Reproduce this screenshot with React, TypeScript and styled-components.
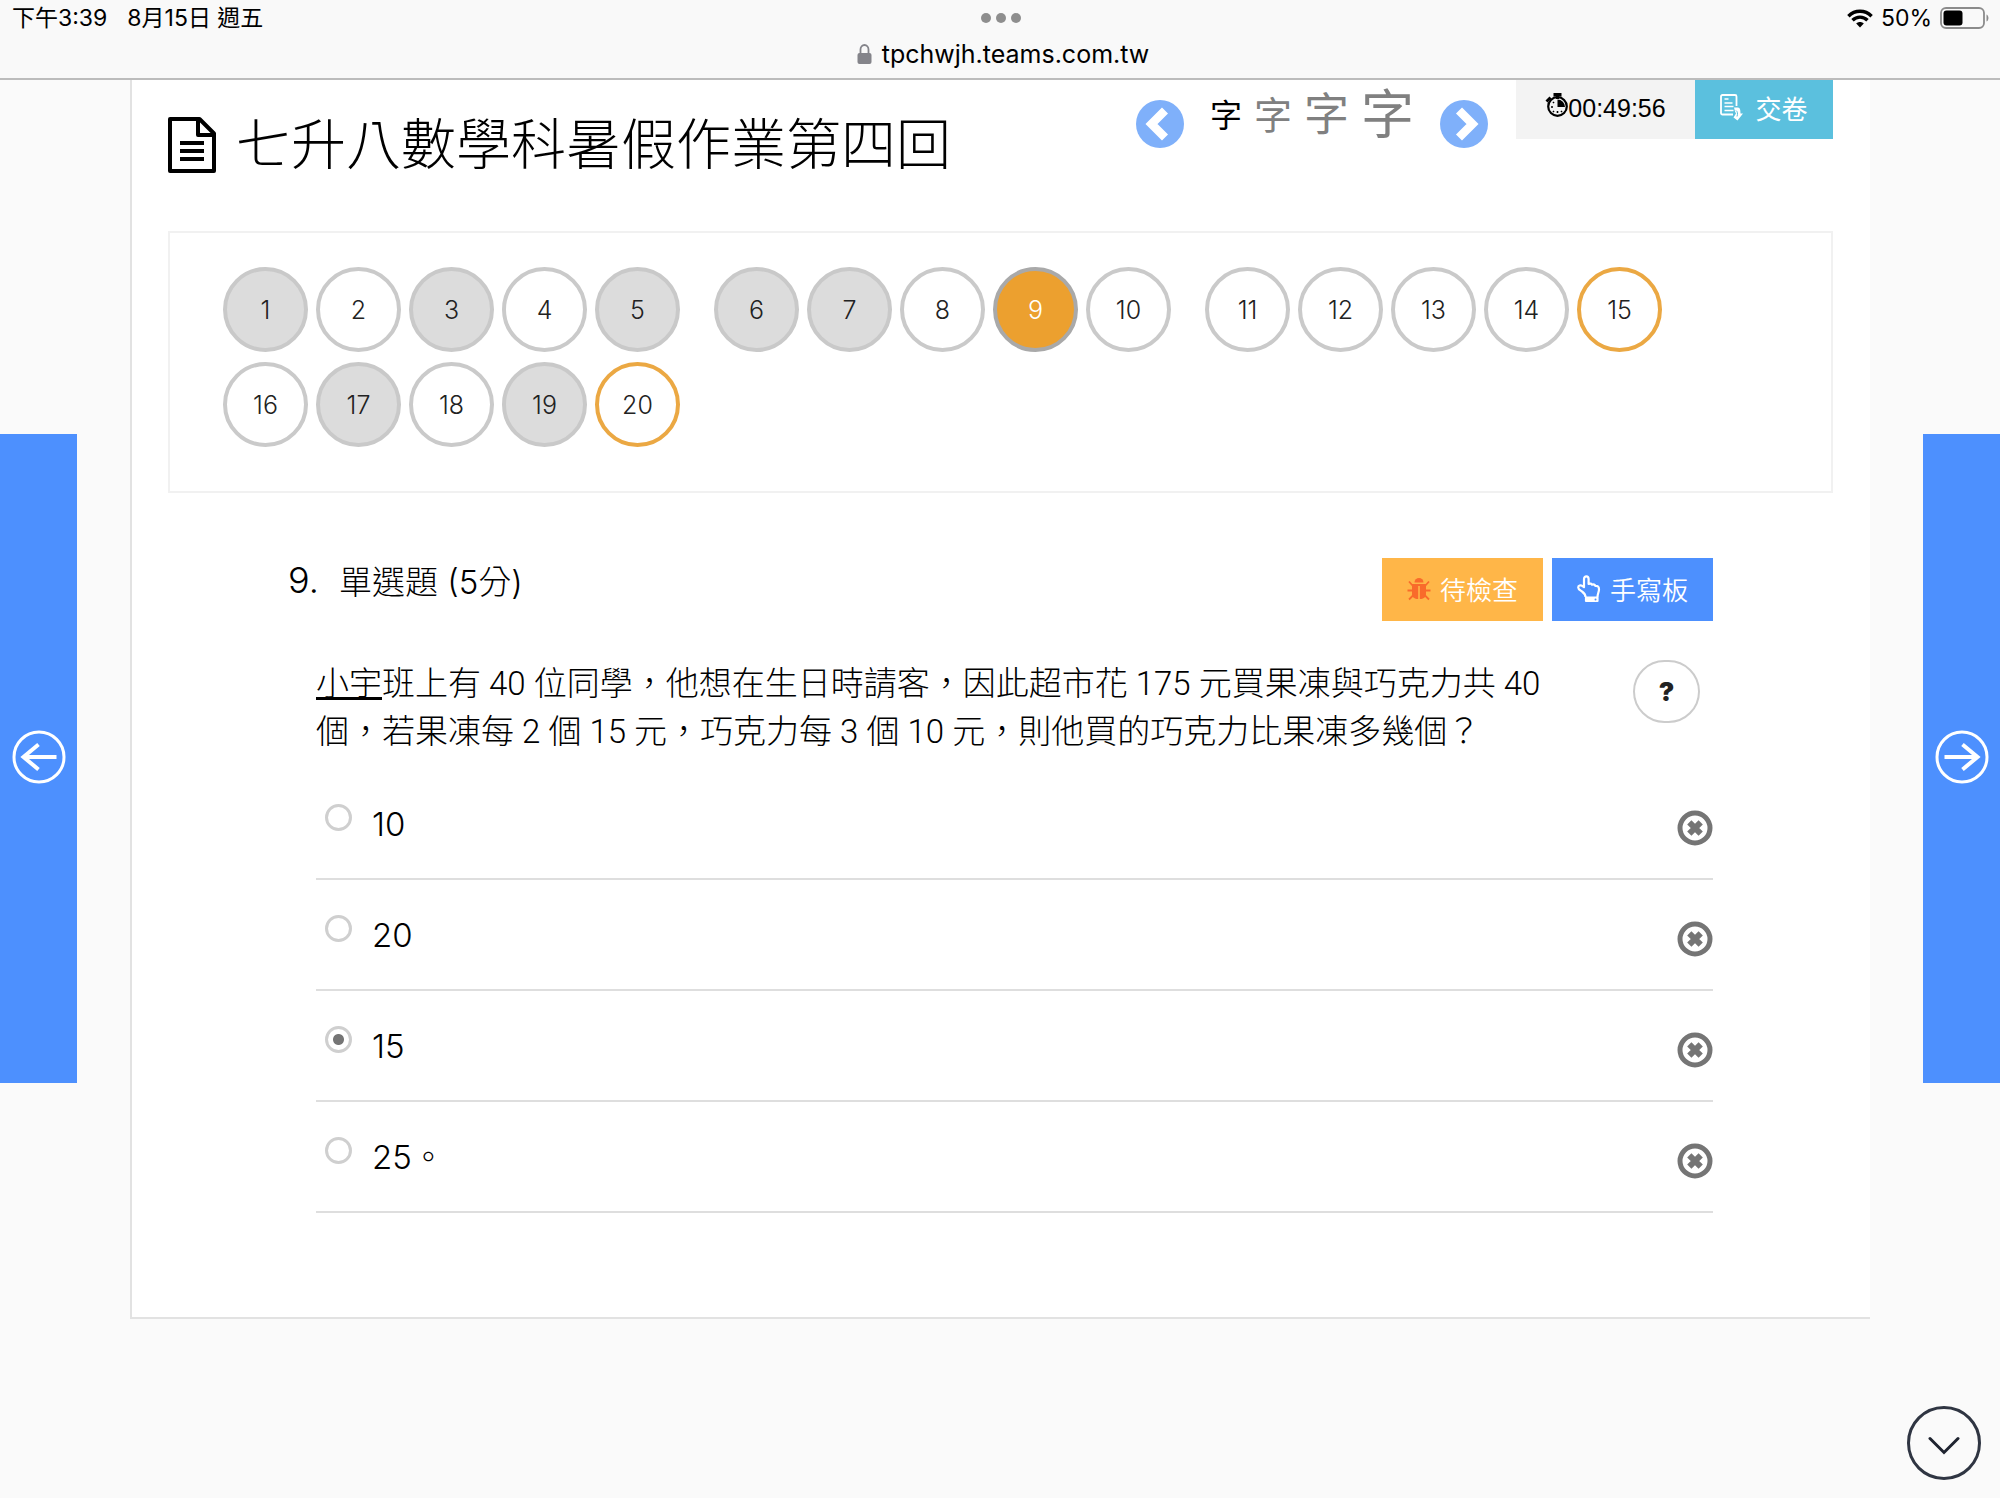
import React, { useState } from "react";
import styled, { createGlobalStyle, css } from "styled-components";

const GlobalStyle = createGlobalStyle`
  *, *::before, *::after { box-sizing: border-box; }
  body {
    margin: 0;
    background: #fafafa;
    color: #000;
    font-family: Roboto, "Noto Sans CJK TC", sans-serif;
    font-weight: 300;
  }
  button, input { font: inherit; color: inherit; margin: 0; }
  button { cursor: pointer; }
  svg { display: block; flex: none; }
`;

const BrowserBar = styled.header`
  display: flex;
  flex-direction: column;
  height: 80px;
  background: #f9f9f9;
  border-bottom: 2px solid #bcbcbc;
  font-family: Inter, "Noto Sans CJK TC", sans-serif;
  font-weight: 400;
`;

const StatusRow = styled.div`
  display: grid;
  grid-template-columns: 1fr auto 1fr;
  align-items: center;
  height: 36px;
  padding: 0 10px 0 12px;
  font-size: 23px;
  line-height: 36px;
`;

const StatusGroup = styled.div<{ $end?: boolean }>`
  display: flex;
  align-items: center;
  gap: ${(p) => (p.$end ? "8px" : "20px")};
  justify-content: ${(p) => (p.$end ? "flex-end" : "flex-start")};
`;

const Dots = styled.div`
  display: flex;
  gap: 5px;
`;

const Dot = styled.span`
  width: 10px;
  height: 10px;
  border-radius: 50%;
  background: #8e8e8e;
`;

const AddressRow = styled.div`
  display: flex;
  justify-content: center;
  align-items: center;
  gap: 10px;
  height: 36px;
  padding-left: 6px;
  font-size: 25px;
  line-height: 36px;
`;

const Shell = styled.div`
  display: grid;
  grid-template-columns: 77px minmax(0, 1fr) 77px;
  column-gap: 53px;
  align-items: start;
`;

const SideButton = styled.button`
  display: flex;
  align-items: center;
  justify-content: center;
  height: 649px;
  margin-top: 354px;
  padding: 0 0 4px;
  border: 0;
  background: #4d90fe;
  color: #fff;
`;

const Sheet = styled.main`
  background: #fff;
  border-left: 2px solid #e2e2e2;
  border-bottom: 2px solid #e2e2e2;
  padding: 0 37px 104px 36px;
`;

const ExamHeader = styled.div`
  display: flex;
  justify-content: space-between;
  align-items: flex-start;
  height: 151px;
`;

const Title = styled.h1`
  display: flex;
  align-items: center;
  gap: 20px;
  margin: 0;
  padding-top: 33px;
  font-size: 55px;
  line-height: 64px;
  font-weight: 300;
`;

const Tools = styled.div`
  display: flex;
  align-items: flex-start;
`;

const FontSizer = styled.div`
  display: flex;
  align-items: center;
  padding-top: 12px;
  margin-right: 28px;
`;

const RoundArrow = styled.button`
  padding: 0;
  border: 0;
  background: none;
`;

const Sizes = styled.div`
  display: flex;
  align-items: center;
  gap: 12px;
  height: 48px;
  padding: 0 26px;
  margin-bottom: 16px;
`;

const SizeButton = styled.button<{ $size: number; $active?: boolean }>`
  padding: 0;
  border: 0;
  background: none;
  font-size: ${(p) => p.$size}px;
  line-height: 56px;
  font-weight: 400;
  color: ${(p) => (p.$active ? "#000" : "#808080")};
`;

const Timer = styled.div`
  display: flex;
  align-items: center;
  justify-content: center;
  width: 179px;
  height: 59px;
  padding-bottom: 3px;
  background: #f3f3f3;
  font-family: "Liberation Sans", sans-serif;
  font-size: 25px;
  font-weight: 400;
`;

const Submit = styled.button`
  display: flex;
  align-items: center;
  justify-content: center;
  gap: 11px;
  width: 138px;
  height: 59px;
  padding: 0 0 4px;
  border: 0;
  background: #5bc0de;
  color: #fff;
  font-size: 26px;
  font-weight: 400;
`;

const Navigator = styled.nav`
  display: flex;
  flex-wrap: wrap;
  align-content: flex-start;
  column-gap: 34px;
  row-gap: 10px;
  min-height: 262px;
  padding: 34px 53px;
  border: 2px solid #f1f1f1;
`;

const NumberGroup = styled.div`
  display: flex;
  gap: 8px;
`;

type NumberState = "open" | "done" | "current" | "flagged";

const stateStyles = {
  open: css`background: #fff; border-color: #cacaca;`,
  done: css`background: #dcdcdc; border-color: #c9c9c9;`,
  current: css`background: #eca02f; border-color: #a9a9a9; color: #fff;`,
  flagged: css`background: #fff; border-color: #eba843;`,
};

const NumberButton = styled.button<{ $state: NumberState }>`
  width: 85px;
  height: 85px;
  padding: 0;
  border: 4px solid;
  border-radius: 50%;
  font-family: Inter, sans-serif;
  font-size: 25px;
  color: #222;
  ${(p) => stateStyles[p.$state]}
`;

const Question = styled.section`
  padding: 65px 120px 0 120px;
`;

const QuestionHead = styled.div`
  display: flex;
  justify-content: space-between;
  align-items: flex-start;
  height: 64px;
`;

const Kind = styled.h2`
  display: flex;
  align-items: flex-start;
  gap: 20px;
  margin: 0;
  font-family: Inter, "Noto Sans CJK TC", sans-serif;
  font-size: 33px;
  line-height: 48px;
  font-weight: 300;
`;

const Ordinal = styled.span`
  font-size: 36px;
  line-height: 44px;
`;

const Actions = styled.div`
  display: flex;
  gap: 9px;
`;

const ActionButton = styled.button<{ $tone: "warn" | "primary" }>`
  display: flex;
  align-items: center;
  justify-content: center;
  gap: 9px;
  width: 161px;
  height: 63px;
  padding: 0 0 2px;
  border: 0;
  background: ${(p) => (p.$tone === "warn" ? "#ffb648" : "#4d90fe")};
  color: #fff;
  font-size: 26px;
  font-weight: 350;
`;

const QuestionBody = styled.div`
  display: flex;
  justify-content: space-between;
  align-items: flex-start;
  padding: 38px 13px 0 28px;
`;

const Prompt = styled.p`
  margin: 0;
  max-width: 1250px;
  font-size: 33px;
  line-height: 48px;
`;

const HelpButton = styled.button`
  width: 67px;
  height: 63px;
  padding: 0;
  border: 2px solid #ccc;
  border-radius: 32px;
  background: #fff;
  color: #222;
  font-family: Inter, sans-serif;
  font-size: 26px;
  font-weight: 900;
`;

const Options = styled.ul`
  margin: 13px 0 0 28px;
  padding: 0;
  list-style: none;
`;

const OptionRow = styled.li`
  display: flex;
  justify-content: space-between;
  align-items: center;
  height: 111px;
  border-bottom: 2px solid #dedede;
`;

const OptionLabel = styled.label`
  display: flex;
  align-items: center;
  gap: 20px;
  font-family: Inter, "Noto Sans CJK TC", sans-serif;
  font-size: 33px;
  line-height: 48px;
`;

const Radio = styled.input`
  appearance: none;
  width: 27px;
  height: 27px;
  margin: 0 0 12px 9px;
  border: 3px solid #cfcfcf;
  border-radius: 50%;
  background: #fff;
  &:checked {
    background: radial-gradient(circle, #757575 5px, #fff 6px);
  }
`;

const EraseButton = styled.button`
  padding: 8px 0 0;
  border: 0;
  background: none;
`;

const ScrollDown = styled.button`
  position: fixed;
  right: 19px;
  bottom: 18px;
  display: flex;
  align-items: center;
  justify-content: center;
  width: 74px;
  height: 74px;
  padding: 3px 0 0;
  border: 3px solid #2f3542;
  border-radius: 50%;
  background: #fafafa;
`;

const WifiIcon = () => (
  <svg width="26" height="19" viewBox="0 0 26 19" aria-hidden="true" fill="none" stroke="#000" strokeWidth="3.4">
    <path d="M1.4 7.2C8 .6 18 .6 24.600 7.200" />
    <path d="M5.500 11.300c4.300-4.200 10.700-4.200 15 0" />
    <path d="M9.200 14.400c2.200-2 5.400-2 7.600 0L13 18.400z" fill="#000" stroke="none" />
  </svg>
);

const BatteryIcon = () => (
  <svg width="50" height="22" viewBox="0 0 50 22" aria-hidden="true">
    <rect x="1" y="1" width="43" height="20" rx="5" fill="none" stroke="#8b8b8b" strokeWidth="1.800" />
    <rect x="3.500" y="3.500" width="19" height="15" rx="3" />
    <path d="M46.500 7.500c2.600 1 2.600 6 0 7z" fill="#8b8b8b" />
  </svg>
);

const LockIcon = () => (
  <svg width="15" height="20" viewBox="0 0 15 20" aria-hidden="true">
    <rect x="0.500" y="9" width="14" height="11" rx="2" fill="#84848a" />
    <path d="M3.500 10V5.500a4 4.500 0 0 1 8 0V10" fill="none" stroke="#84848a" strokeWidth="1.800" />
  </svg>
);

const FileIcon = () => (
  <svg width="48" height="56" viewBox="0 0 48 56" aria-hidden="true" fill="none" stroke="#000" strokeWidth="4" strokeLinejoin="round">
    <path d="M2 2h29.500L46 16.500V54H2z" />
    <path d="M30 2v16h16" />
    <path d="M12 26h24M12 34h24M12 42h24" />
  </svg>
);

const CircleChevron = ({ next }: { next?: boolean }) => (
  <svg width="48" height="48" viewBox="0 0 48 48" aria-hidden="true">
    <circle cx="24" cy="24" r="24" fill="#7fb0fa" />
    <path
      d={next ? "M19 10.500 32.500 24 19 37.500" : "M29 10.500 15.500 24 29 37.500"}
      fill="none"
      stroke="#fff"
      strokeWidth="8.500"
    />
  </svg>
);

const StopwatchIcon = () => (
  <svg width="23" height="40" viewBox="0 0 23 40" aria-hidden="true">
    <circle cx="12.500" cy="18.500" r="9.300" fill="none" stroke="#000" strokeWidth="2.200" />
    <path d="M8.500 5h8v3.500h-8zM11 7h3v4h-3zM0.500 12.500l4-4 2 2-4 4z" />
    <path d="M12.500 19v-7.500a7.500 7.500 0 0 1 7.500 7.500z" />
    <path
      d="M6 19h2M8 14l1 1M8 24l1-1M12.500 25v-2M17 24l-1-1"
      stroke="#000"
      strokeWidth="1.600"
      fill="none"
    />
  </svg>
);

const SubmitIcon = () => (
  <svg width="24" height="36" viewBox="0 0 24 36" aria-hidden="true" fill="none" stroke="#fff" strokeWidth="1.800">
    <path d="M13 24.500H2.500a1.500 1.500 0 0 1-1.500-1.500V6.500A1.500 1.500 0 0 1 2.500 5h12.500a1.500 1.500 0 0 1 1.500 1.500V16" />
    <path d="M4.500 9h4M4.500 13h8M4.500 16.500h9M4.500 20.500h9" strokeWidth="1.400" />
    <path d="M14 17.500h4c2 .5 2.500 2 2.500 6h2.500l-5.500 7-4-3 2.500-4-1-2z" fill="#fff" stroke="none" />
    <path d="M16 20.500c1.500 1 2 3 1 6" stroke="#5bc0de" strokeWidth="1" />
  </svg>
);

const BugIcon = () => (
  <svg width="24" height="24" viewBox="0 0 24 24" aria-hidden="true" fill="#f96b2b">
    <path d="M7.500 5.500a4.500 4.500 0 0 1 9 0z" />
    <path d="M5 7h14v10c0 3-2.500 5-6.200 5V9h-1.600v13C7.500 22 5 20 5 17z" />
    <path d="M2 4.500 6 9M22 4.500 18 9M.500 13.500H6M23.500 13.500H18M2 22.500 6.500 18M22 22.500 17.500 18" stroke="#f96b2b" strokeWidth="1.800" />
  </svg>
);

const HandIcon = () => (
  <svg width="24" height="28" viewBox="0 0 24 28" aria-hidden="true" fill="none" stroke="#fff" strokeWidth="2.200" strokeLinejoin="round">
    <path d="M8.500 22c0-2.500-1.500-4-3.500-5.500-1.500-1.200-3.800-2-3.800-4 0-2.200 2.500-2.600 4-1.600l1.800 1.300V4c0-3.600 4.600-3.600 4.600 0v5c1.500-.8 2.900-.3 3.400.7 1.600-.6 2.900 0 3.300 1.100 2.400-.2 3.700 1 3.700 3.500 0 3-1.500 4.500-1.500 7.700" />
    <path d="M9 22.500h11.500V26H9z" fill="#fff" />
    <circle cx="18.500" cy="24.500" r="1" fill="#4d90fe" stroke="none" />
  </svg>
);

const CircleArrow = ({ next }: { next?: boolean }) => (
  <svg width="54" height="54" viewBox="0 0 54 54" aria-hidden="true" fill="none" stroke="#fff">
    <circle cx="27" cy="27" r="25" strokeWidth="3" />
    <path
      d={next ? "M9.500 27H43M27.500 14.500 42.500 27 27.500 39.500" : "M44.500 27H11M26.500 14.500 11.500 27 26.500 39.500"}
      strokeWidth="4"
    />
  </svg>
);

const EraseIcon = () => (
  <svg width="36" height="36" viewBox="0 0 36 36" aria-hidden="true" fill="none" stroke="#757575">
    <circle cx="18" cy="18" r="15" strokeWidth="5" />
    <path d="m12.300 12.300 11.400 11.400M23.700 12.300 12.300 23.700" strokeWidth="6" />
  </svg>
);

const ChevronDown = () => (
  <svg width="32" height="20" viewBox="0 0 32 20" aria-hidden="true" fill="none" stroke="#1f2430" strokeWidth="3" strokeLinecap="round">
    <path d="M2 3.500 16 17.500 30 3.500" />
  </svg>
);

const groups = [
  [1, 2, 3, 4, 5],
  [6, 7, 8, 9, 10],
  [11, 12, 13, 14, 15],
  [16, 17, 18, 19, 20],
];
const done = [1, 3, 5, 6, 7, 17, 19];
const flagged = [15, 20];
const sizes = [32, 38, 45, 53];
const options = ["10", "20", "15", "25。"];

const stateOf = (n: number): NumberState =>
  n === 9 ? "current" : done.includes(n) ? "done" : flagged.includes(n) ? "flagged" : "open";

export default function App() {
  const [answer, setAnswer] = useState("15");
  const [size, setSize] = useState(32);

  return (
    <>
      <GlobalStyle />
      <BrowserBar lang="zh-TW">
        <StatusRow>
          <StatusGroup>
            <span>下午3:39</span>
            <span>8月15日 週五</span>
          </StatusGroup>
          <Dots>
            <Dot />
            <Dot />
            <Dot />
          </Dots>
          <StatusGroup $end>
            <WifiIcon />
            <span>50%</span>
            <BatteryIcon />
          </StatusGroup>
        </StatusRow>
        <AddressRow>
          <LockIcon />
          <span>tpchwjh.teams.com.tw</span>
        </AddressRow>
      </BrowserBar>

      <Shell lang="zh-TW">
        <SideButton aria-label="上一題">
          <CircleArrow />
        </SideButton>

        <Sheet>
          <ExamHeader>
            <Title>
              <FileIcon />
              七升八數學科暑假作業第四回
            </Title>
            <Tools>
              <FontSizer>
                <RoundArrow aria-label="縮小">
                  <CircleChevron />
                </RoundArrow>
                <Sizes>
                  {sizes.map((s) => (
                    <SizeButton key={s} $size={s} $active={s === size} onClick={() => setSize(s)}>
                      字
                    </SizeButton>
                  ))}
                </Sizes>
                <RoundArrow aria-label="放大">
                  <CircleChevron next />
                </RoundArrow>
              </FontSizer>
              <Timer>
                <StopwatchIcon />
                <span>00:49:56</span>
              </Timer>
              <Submit>
                <SubmitIcon />
                交卷
              </Submit>
            </Tools>
          </ExamHeader>

          <Navigator>
            {groups.map((group) => (
              <NumberGroup key={group[0]}>
                {group.map((n) => (
                  <NumberButton key={n} $state={stateOf(n)}>
                    {n}
                  </NumberButton>
                ))}
              </NumberGroup>
            ))}
          </Navigator>

          <Question>
            <QuestionHead>
              <Kind>
                <Ordinal>9.</Ordinal>
                單選題 (5分)
              </Kind>
              <Actions>
                <ActionButton $tone="warn">
                  <BugIcon />
                  待檢查
                </ActionButton>
                <ActionButton $tone="primary">
                  <HandIcon />
                  手寫板
                </ActionButton>
              </Actions>
            </QuestionHead>

            <QuestionBody>
              <Prompt>
                <u>小宇</u>班上有 40 位同學，他想在生日時請客，因此超市花 175 元買果凍與巧克力共 40
                個，若果凍每 2 個 15 元，巧克力每 3 個 10 元，則他買的巧克力比果凍多幾個？
              </Prompt>
              <HelpButton>?</HelpButton>
            </QuestionBody>

            <Options>
              {options.map((text) => {
                const value = text.replace("。", "");
                return (
                  <OptionRow key={value}>
                    <OptionLabel>
                      <Radio
                        type="radio"
                        name="answer"
                        value={value}
                        checked={answer === value}
                        onChange={() => setAnswer(value)}
                      />
                      {text}
                    </OptionLabel>
                    <EraseButton aria-label="刪去">
                      <EraseIcon />
                    </EraseButton>
                  </OptionRow>
                );
              })}
            </Options>
          </Question>
        </Sheet>

        <SideButton aria-label="下一題">
          <CircleArrow next />
        </SideButton>
      </Shell>

      <ScrollDown aria-label="往下">
        <ChevronDown />
      </ScrollDown>
    </>
  );
}
